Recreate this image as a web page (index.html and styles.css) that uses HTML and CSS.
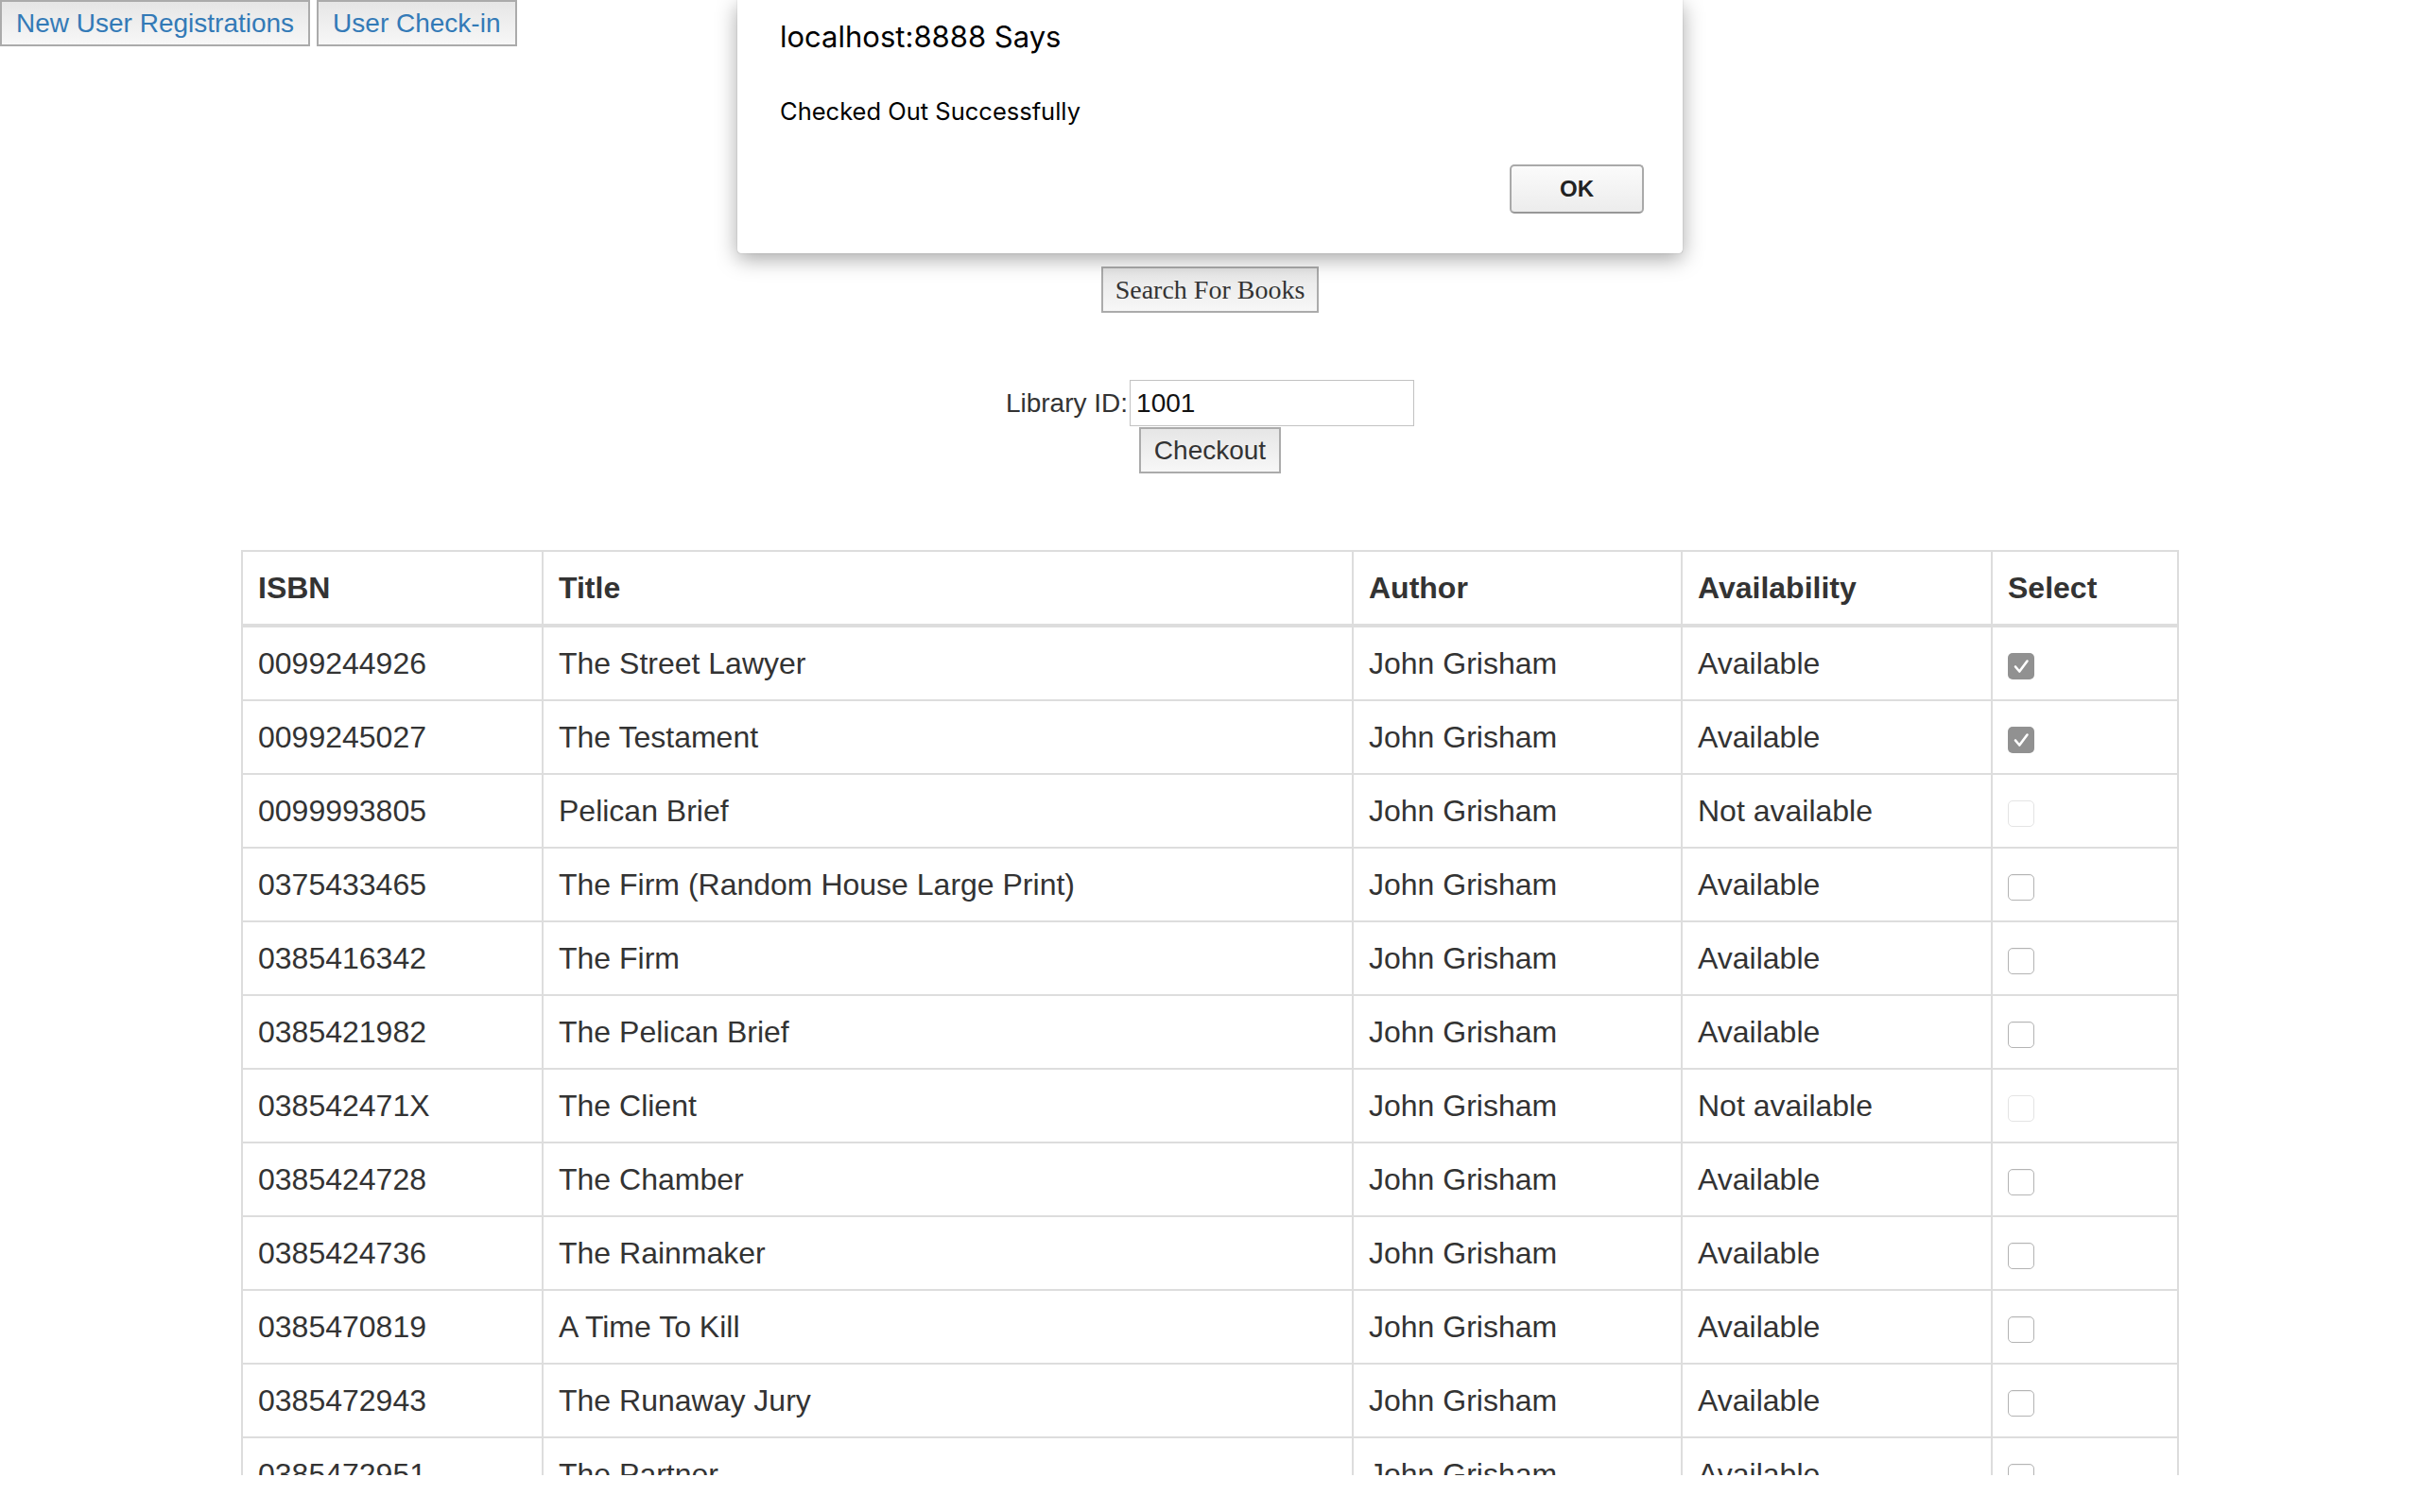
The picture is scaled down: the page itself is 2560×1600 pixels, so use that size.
FILE: index.html
```html
<!DOCTYPE html>
<html lang="en">
<head>
<meta charset="utf-8">
<title>Library</title>
<link rel="stylesheet" href="styles.css">
</head>
<body>
<div class="viewport">
  <nav class="topnav">
    <a class="navbtn" href="#">New User Registrations</a>
    <a class="navbtn" href="#">User Check-in</a>
  </nav>

  <div class="search">
    <button class="btn serif" type="button">Search For Books</button>
  </div>

  <form class="checkout">
    <div class="idrow">
      <label class="idlabel" for="libid">Library ID:</label>
      <input class="idinput" id="libid" type="text" value="1001">
    </div>
    <button class="btn sans" type="button">Checkout</button>
  </form>

  <table class="books">
    <colgroup>
      <col class="c-isbn"><col class="c-title"><col class="c-author"><col class="c-avail"><col class="c-select">
    </colgroup>
    <thead>
      <tr><th>ISBN</th><th>Title</th><th>Author</th><th>Availability</th><th>Select</th></tr>
    </thead>
    <tbody>
      <tr><td>0099244926</td><td>The Street Lawyer</td><td>John Grisham</td><td>Available</td><td><span class="cb checked"><svg viewBox="0 0 28 28" width="28" height="28"><path d="M8 14.5 L12.3 19.5 L20.5 8.5" fill="none" stroke="#fff" stroke-width="2.6" stroke-linecap="round" stroke-linejoin="round"/></svg></span></td></tr>
      <tr><td>0099245027</td><td>The Testament</td><td>John Grisham</td><td>Available</td><td><span class="cb checked"><svg viewBox="0 0 28 28" width="28" height="28"><path d="M8 14.5 L12.3 19.5 L20.5 8.5" fill="none" stroke="#fff" stroke-width="2.6" stroke-linecap="round" stroke-linejoin="round"/></svg></span></td></tr>
      <tr><td>0099993805</td><td>Pelican Brief</td><td>John Grisham</td><td>Not available</td><td><span class="cb disabled"></span></td></tr>
      <tr><td>0375433465</td><td>The Firm (Random House Large Print)</td><td>John Grisham</td><td>Available</td><td><span class="cb"></span></td></tr>
      <tr><td>0385416342</td><td>The Firm</td><td>John Grisham</td><td>Available</td><td><span class="cb"></span></td></tr>
      <tr><td>0385421982</td><td>The Pelican Brief</td><td>John Grisham</td><td>Available</td><td><span class="cb"></span></td></tr>
      <tr><td>038542471X</td><td>The Client</td><td>John Grisham</td><td>Not available</td><td><span class="cb disabled"></span></td></tr>
      <tr><td>0385424728</td><td>The Chamber</td><td>John Grisham</td><td>Available</td><td><span class="cb"></span></td></tr>
      <tr><td>0385424736</td><td>The Rainmaker</td><td>John Grisham</td><td>Available</td><td><span class="cb"></span></td></tr>
      <tr><td>0385470819</td><td>A Time To Kill</td><td>John Grisham</td><td>Available</td><td><span class="cb"></span></td></tr>
      <tr><td>0385472943</td><td>The Runaway Jury</td><td>John Grisham</td><td>Available</td><td><span class="cb"></span></td></tr>
      <tr><td>0385472951</td><td>The Partner</td><td>John Grisham</td><td>Available</td><td><span class="cb"></span></td></tr>
    </tbody>
  </table>

  <div class="dialog" role="alertdialog">
    <div class="dlg-title">localhost:8888 Says</div>
    <div class="dlg-msg">Checked Out Successfully</div>
    <div class="dlg-actions"><button class="okbtn" type="button">OK</button></div>
  </div>
</div>
</body>
</html>
```

FILE: styles.css
```css
html, body {
  margin: 0;
  padding: 0;
  background: #fff;
}

body {
  font-family: "Liberation Sans", Arial, Helvetica, sans-serif;
  color: #333;
}

.viewport {
  position: relative;
  height: 1561px;
  overflow: hidden;
}

/* top navigation */
.topnav {
  display: flex;
  gap: 7px;
}

.navbtn {
  display: flex;
  align-items: center;
  box-sizing: border-box;
  height: 49px;
  padding: 0 15px;
  border: 2px solid #ababab;
  background: linear-gradient(to bottom, #e6e6e6, #f7f7f7);
  color: #337ab7;
  font-size: 28px;
  text-decoration: none;
}

/* generic page buttons */
.btn {
  box-sizing: border-box;
  height: 49px;
  border: 2px solid #ababab;
  border-radius: 0;
  background: linear-gradient(to bottom, #e6e6e6, #f7f7f7);
  color: #333;
  font-size: 28px;
  margin: 0;
}

.btn.serif {
  font-family: "Liberation Serif", "Times New Roman", serif;
  padding: 0 13px;
}

.btn.sans {
  font-family: "Liberation Sans", Arial, sans-serif;
  padding: 0 14px;
}

.search {
  display: flex;
  justify-content: center;
  margin-top: 233px;
}

.checkout {
  display: flex;
  flex-direction: column;
  align-items: center;
  margin: 71px 0 0;
}

.idrow {
  display: flex;
  align-items: center;
  gap: 2px;
}

.idlabel {
  font-size: 28px;
  color: #333;
}

.idinput {
  box-sizing: border-box;
  width: 301px;
  height: 49px;
  border: 1px solid #c2c2c2;
  padding: 0 6px;
  margin: 0;
  font-family: "Liberation Sans", Arial, sans-serif;
  font-size: 28px;
  color: #111;
  outline: none;
}

.checkout .btn {
  margin-top: 1px;
}

/* table */
.books {
  width: 2048px;
  margin: 81px auto 0;
  border-collapse: collapse;
  table-layout: fixed;
  border: 2px solid #ddd;
  font-size: 32px;
  color: #333;
}

.c-isbn { width: 318px; }
.c-title { width: 857px; }
.c-author { width: 348px; }
.c-avail { width: 328px; }
.c-select { width: 197px; }

.books th,
.books td {
  padding: 16px;
  line-height: 44px;
  text-align: left;
  vertical-align: middle;
  border: 2px solid #ddd;
  white-space: nowrap;
}

.books th {
  font-weight: bold;
}

.books thead th {
  border-bottom-width: 4px;
}

/* checkboxes */
.cb {
  display: inline-block;
  box-sizing: border-box;
  width: 28px;
  height: 28px;
  border-radius: 5px;
  border: 1.5px solid #b4b4b4;
  background: #fff;
  vertical-align: middle;
  box-shadow: inset 0 1px 1px rgba(0,0,0,0.06);
}

.cb.disabled {
  border-color: #e4e4e4;
  box-shadow: none;
}

.cb.checked {
  border: none;
  background: #919191;
  box-shadow: none;
}

.cb svg {
  display: block;
}

/* alert dialog */
.dialog {
  position: absolute;
  left: 780px;
  top: 0;
  width: 1000px;
  height: 268px;
  box-sizing: border-box;
  padding: 0 41px 0 45px;
  background: #fff;
  border-radius: 0 0 4px 4px;
  box-shadow: 0 6px 22px rgba(0,0,0,0.35), 0 0 1px rgba(0,0,0,0.4);
  font-family: Inter, "Liberation Sans", Arial, sans-serif;
  color: #000;
}

.dlg-title {
  padding-top: 20px;
  font-size: 31px;
  line-height: 37px;
}

.dlg-msg {
  margin-top: 45px;
  font-size: 25.5px;
  line-height: 32px;
}

.dlg-actions {
  display: flex;
  justify-content: flex-end;
  margin-top: 40px;
}

.okbtn {
  box-sizing: border-box;
  width: 142px;
  height: 52px;
  border: 2px solid #a9a9a9;
  border-bottom-color: #979797;
  border-radius: 5px;
  background: linear-gradient(to bottom, #fbfbfb, #ececec);
  font-family: "Liberation Sans", Arial, sans-serif;
  font-weight: bold;
  font-size: 24px;
  color: #222;
  margin: 0;
  padding: 0;
}
```
